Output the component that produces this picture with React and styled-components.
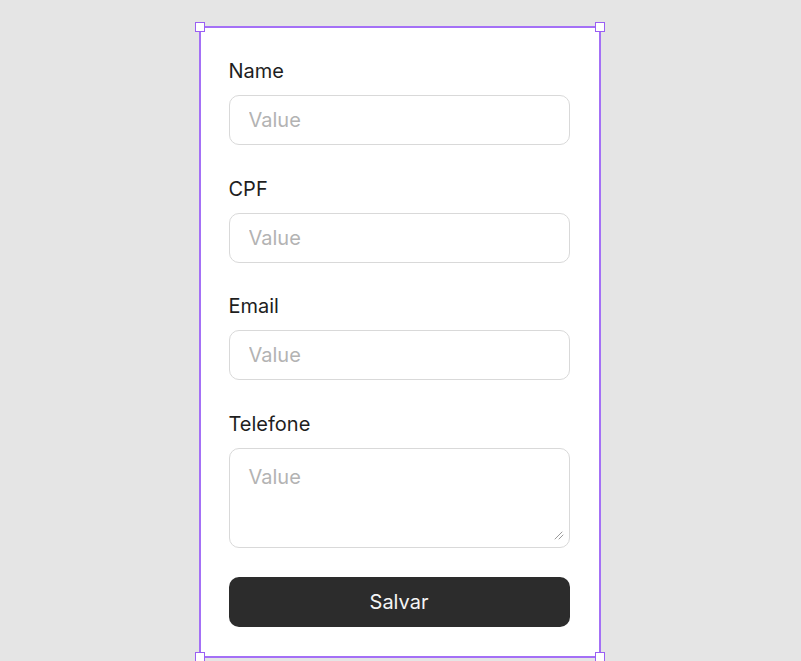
import React from 'react';
import styled, { createGlobalStyle } from 'styled-components';

const GlobalStyle = createGlobalStyle`
  html, body {
    margin: 0;
    padding: 0;
    background: #e5e5e5;
    font-family: Inter, "Noto Sans", sans-serif;
  }
`

const Page = styled.div`
  width: 100%;
  min-height: 661px;
  display: flex;
  justify-content: center;
  padding: 26px 2px 0 0;
  box-sizing: border-box;
`

const Frame = styled.form`
  position: relative;
  width: 402px;
  align-self: flex-start;
  box-sizing: border-box;
  padding: 29px 29px 29px 28px;
  background: #fff;
  border: 2px solid #a470f6;
  display: flex;
  flex-direction: column;
  gap: 29.5px;
`

const Handle = styled.span`
  position: absolute;
  width: 10px;
  height: 10px;
  box-sizing: border-box;
  background: #fff;
  border: 1.5px solid #9a5ff4;
  top: ${p => (p.$bottom ? 'auto' : '-6px')};
  bottom: ${p => (p.$bottom ? '-6px' : 'auto')};
  left: ${p => (p.$right ? 'auto' : '-6px')};
  right: ${p => (p.$right ? '-6px' : 'auto')};
`

const Field = styled.label`
  display: flex;
  flex-direction: column;
  gap: 10px;
`

const Label = styled.span`
  font-size: 20px;
  line-height: 28px;
  color: #1e1e1e;
`

const Input = styled.input`
  height: 50px;
  box-sizing: border-box;
  padding: 0 19px;
  border: 1px solid #d9d9d9;
  border-radius: 10px;
  font-family: inherit;
  font-size: 20px;
  color: #1e1e1e;
  outline: none;

  &::placeholder {
    color: #b3b3b3;
  }
`

const AreaWrap = styled.div`
  position: relative;
  display: flex;
`

const TextArea = styled.textarea`
  flex: 1;
  height: 100px;
  box-sizing: border-box;
  padding: 14px 19px;
  border: 1px solid #d9d9d9;
  border-radius: 10px;
  font-family: inherit;
  font-size: 20px;
  line-height: 28px;
  color: #1e1e1e;
  resize: none;
  outline: none;

  &::placeholder {
    color: #b3b3b3;
  }
`

const Grip = styled.svg`
  position: absolute;
  right: 6px;
  bottom: 8px;
  width: 10px;
  height: 10px;
  pointer-events: none;
`

const Button = styled.button`
  height: 50px;
  border: none;
  border-radius: 10px;
  background: #2c2c2c;
  color: #f5f5f5;
  font-family: inherit;
  font-size: 20px;
  cursor: pointer;
`

const fields = ['Name', 'CPF', 'Email'];

function App() {
  return (
    <Page>
      <GlobalStyle />
      <Frame onSubmit={e => e.preventDefault()}>
        <Handle />
        <Handle $right />
        <Handle $bottom />
        <Handle $bottom $right />
        {fields.map(name => (
          <Field key={name}>
            <Label>{name}</Label>
            <Input placeholder="Value" />
          </Field>
        ))}
        <Field>
          <Label>Telefone</Label>
          <AreaWrap>
            <TextArea placeholder="Value" />
            <Grip viewBox="0 0 10 10">
              <path d="M1 9 L8 2 M5 9 L9 5" stroke="#9a9a9a" strokeWidth="1" strokeLinecap="round" />
            </Grip>
          </AreaWrap>
        </Field>
        <Button type="submit">Salvar</Button>
      </Frame>
    </Page>
  )
}

export default App
